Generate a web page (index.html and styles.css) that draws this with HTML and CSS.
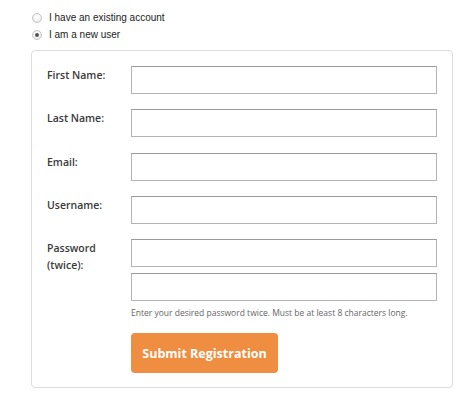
FILE: index.html
```html
<!DOCTYPE html>
<html>
<head>
<meta charset="utf-8">
<link rel="stylesheet" href="styles.css">
</head>
<body>
<div class="choices">
  <label class="choice"><span class="radio"></span>I have an existing account</label>
  <label class="choice"><span class="radio checked"></span>I am a new user</label>
</div>
<form class="panel">
  <div class="row">
    <div class="label">First Name:</div>
    <div class="fields"><span class="input"></span></div>
  </div>
  <div class="row">
    <div class="label">Last Name:</div>
    <div class="fields"><span class="input"></span></div>
  </div>
  <div class="row">
    <div class="label">Email:</div>
    <div class="fields"><span class="input"></span></div>
  </div>
  <div class="row">
    <div class="label">Username:</div>
    <div class="fields"><span class="input"></span></div>
  </div>
  <div class="row">
    <div class="label">Password<br>(twice):</div>
    <div class="fields pw">
      <span class="input"></span>
      <span class="input"></span>
      <p class="help">Enter your desired password twice. Must be at least 8 characters long.</p>
    </div>
  </div>
  <div class="row">
    <div class="label"></div>
    <div class="fields"><button type="button" class="submit">Submit Registration</button></div>
  </div>
</form>
</body>
</html>
```
FILE: styles.css
```css
html, body {
  margin: 0;
  padding: 0;
  background: #ffffff;
}
body {
  padding: 11px 23px 0 31px;
  width: 476px;
  box-sizing: border-box;
}
.choices {
  display: flex;
  flex-direction: column;
  gap: 4px;
  font-family: "Liberation Sans", Arial, sans-serif;
  font-size: 10px;
  color: #222;
}
.choice {
  display: flex;
  align-items: center;
  gap: 7px;
  height: 13px;
}
.radio {
  width: 8px;
  height: 8px;
  border-radius: 50%;
  border: 1px solid #c4c4c4;
  background: radial-gradient(circle at 50% 40%, #ffffff 0%, #e6e6e6 100%);
  position: relative;
  margin-left: 1px;
}
.radio.checked::after {
  content: "";
  position: absolute;
  left: 2px;
  top: 2px;
  width: 4px;
  height: 4px;
  border-radius: 50%;
  background: #555;
}
.panel {
  margin-top: 9px;
  border: 1px solid #dcdcdc;
  border-radius: 4px;
  padding: 15px 15px 14px 15px;
  display: flex;
  flex-direction: column;
  gap: 15.3px;
}
.row {
  display: grid;
  grid-template-columns: 84px 306px;
}
.label {
  font-family: "Open Sans", sans-serif;
  font-size: 10.5px;
  font-weight: 600;
  color: #3a3a3a;
  line-height: 17px;
  padding-top: 1px;
}
.fields {
  display: flex;
  flex-direction: column;
  gap: 6px;
}
.input {
  display: block;
  height: 28px;
  box-sizing: border-box;
  border: 1px solid #b4b4b4;
  border-top-color: #9a9a9a;
  background: #fff;
}
.help {
  margin: 0;
  font-family: "Open Sans", sans-serif;
  font-size: 8.5px;
  color: #666;
  line-height: 11px;
}
.pw {
  gap: 6px;
}
.submit {
  margin-top: 0;
  width: 147px;
  height: 40px;
  border: none;
  border-radius: 4px;
  background: #ef8d41;
  color: #fff;
  font-family: "Open Sans", sans-serif;
  font-weight: 700;
  font-size: 12.5px;
  padding: 0;
  text-align: center;
}
```
